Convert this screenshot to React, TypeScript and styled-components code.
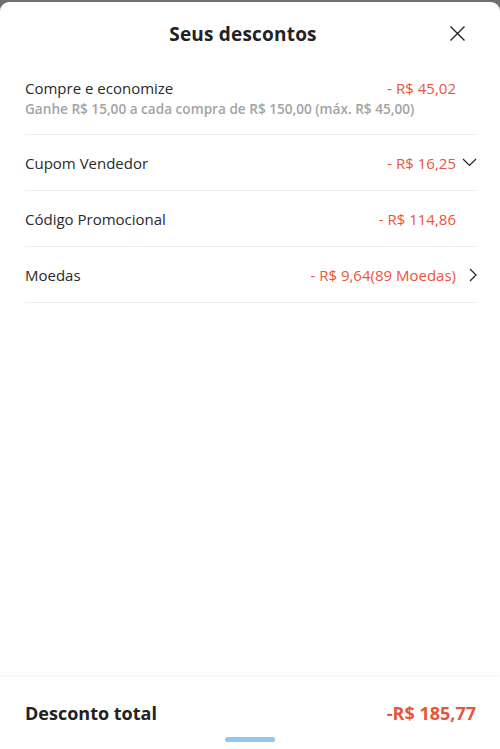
import React from 'react';
import styled, { createGlobalStyle } from 'styled-components';

// Types
interface DiscountItem {
  id: string;
  label: string;
  value: string;
  note?: string;
  icon?: 'down' | 'right';
}

const GlobalStyle = createGlobalStyle`
  html, body {
    margin: 0;
    padding: 0;
    background: #6f6f6f;
  }
  body {
    font-family: "Open Sans", "Noto Sans", sans-serif;
    -webkit-font-smoothing: antialiased;
  }
`;

// Styled Components
const Sheet = styled.div`
  margin-top: 2px;
  height: 747px;
  background: #ffffff;
  border-radius: 9px 9px 0 0;
  display: flex;
  flex-direction: column;
  overflow: hidden;
`;

const Header = styled.div`
  height: 64px;
  padding-right: 14px;
  display: flex;
  align-items: center;
  justify-content: center;
  position: relative;
`;

const Title = styled.h1`
  margin: 0;
  font-size: 19px;
  font-weight: 700;
  color: #222222;
  letter-spacing: 0.2px;
`;

const CloseButton = styled.button`
  position: absolute;
  right: 34px;
  top: 23px;
  width: 17px;
  height: 17px;
  padding: 0;
  border: none;
  background: transparent;
  display: flex;
  align-items: center;
  justify-content: center;
  cursor: pointer;
`;

const List = styled.div`
  padding: 0 23px 0 25px;
`;

const Row = styled.div<{ $tall?: boolean }>`
  display: flex;
  flex-direction: column;
  justify-content: center;
  gap: 1px;
  height: ${p => (p.$tall ? 'auto' : '55px')};
  padding: ${p => (p.$tall ? '12px 0 15px' : '0')};
  border-bottom: 1px solid #efefef;
`;

const Line = styled.div`
  display: flex;
  align-items: center;
`;

const Label = styled.span`
  flex: 1;
  font-size: 15px;
  line-height: 20px;
  color: #2a2a2a;
`;

const Note = styled.span`
  font-size: 13.6px;
  line-height: 20px;
  font-weight: 600;
  color: #a3a3a3;
  white-space: nowrap;
`;

const Value = styled.span`
  font-size: 15px;
  line-height: 20px;
  font-weight: 500;
  color: #e9553a;
  white-space: nowrap;
`;

const IconSlot = styled.span`
  width: 21px;
  height: 20px;
  display: flex;
  align-items: center;
  justify-content: flex-end;
`;

const Footer = styled.div`
  margin-top: auto;
  padding: 24px 0 7px;
  box-shadow: 0 -4px 5px rgba(0, 0, 0, 0.025);
  border-top: 1px solid #f7f7f7;
`;

const TotalRow = styled.div`
  display: flex;
  align-items: center;
  justify-content: space-between;
  padding: 0 24px 0 25px;
  line-height: 24px;
`;

const TotalLabel = styled.span`
  font-size: 18px;
  font-weight: 700;
  color: #222222;
`;

const TotalValue = styled.span`
  font-size: 18px;
  font-weight: 700;
  color: #e9553a;
`;

const HomeIndicator = styled.div`
  width: 50px;
  height: 5px;
  margin: 12px auto 0;
  border-radius: 3px;
  background: #92c5f2;
`;

const CloseIcon = () => (
  <svg width="17" height="17" viewBox="0 0 17 17" fill="none">
    <path d="M1.5 1.5L15.5 15.5M15.5 1.5L1.5 15.5" stroke="#222" strokeWidth="1.4" />
  </svg>
);

const ChevronDown = () => (
  <svg width="15" height="9" viewBox="0 0 15 9" fill="none">
    <path d="M1 1L7.5 7.5L14 1" stroke="#222" strokeWidth="1.2" />
  </svg>
);

const ChevronRight = () => (
  <svg width="8" height="14" viewBox="0 0 8 14" fill="none">
    <path d="M1 1L7 7L1 13" stroke="#222" strokeWidth="1.2" />
  </svg>
);

const items: DiscountItem[] = [
  {
    id: 'buy-save',
    label: 'Compre e economize',
    value: '- R$ 45,02',
    note: 'Ganhe R$ 15,00 a cada compra de R$ 150,00 (máx. R$ 45,00)'
  },
  { id: 'seller', label: 'Cupom Vendedor', value: '- R$ 16,25', icon: 'down' },
  { id: 'promo', label: 'Código Promocional', value: '- R$ 114,86' },
  { id: 'coins', label: 'Moedas', value: '- R$ 9,64(89 Moedas)', icon: 'right' }
];

const App: React.FC = () => {
  return (
    <>
      <GlobalStyle />
      <Sheet>
        <Header>
          <Title>Seus descontos</Title>
          <CloseButton aria-label="Fechar">
            <CloseIcon />
          </CloseButton>
        </Header>

        <List>
          {items.map(item => (
            <Row key={item.id} $tall={!!item.note}>
              <Line>
                <Label>{item.label}</Label>
                <Value>{item.value}</Value>
                <IconSlot>
                  {item.icon === 'down' && <ChevronDown />}
                  {item.icon === 'right' && <ChevronRight />}
                </IconSlot>
              </Line>
              {item.note && <Note>{item.note}</Note>}
            </Row>
          ))}
        </List>

        <Footer>
          <TotalRow>
            <TotalLabel>Desconto total</TotalLabel>
            <TotalValue>-R$ 185,77</TotalValue>
          </TotalRow>
          <HomeIndicator />
        </Footer>
      </Sheet>
    </>
  );
};

export default App;
